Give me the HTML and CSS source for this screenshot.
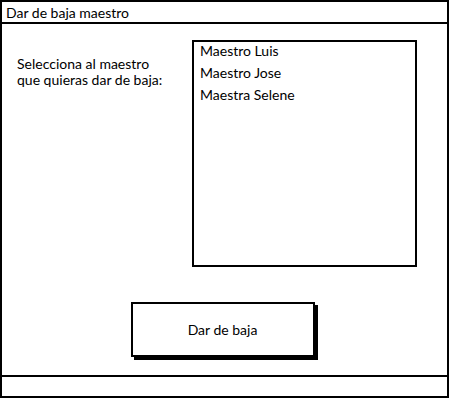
FILE: index.html
```html
<!DOCTYPE html>
<html lang="es">
<head>
<meta charset="utf-8">
<link rel="stylesheet" href="styles.css">
</head>
<body>
<div class="window">
  <div class="titlebar">Dar de baja maestro</div>
  <div class="main">
    <div class="row">
      <div class="label">Selecciona al maestro<br>que quieras dar de baja:</div>
      <ul class="listbox">
        <li>Maestro Luis</li>
        <li>Maestro Jose</li>
        <li>Maestra Selene</li>
      </ul>
    </div>
    <div class="actions">
      <button class="btn">Dar de baja</button>
    </div>
  </div>
  <div class="footer"></div>
</div>
</body>
</html>
```
FILE: styles.css
```css
* { box-sizing: border-box; }
html, body { margin: 0; padding: 0; background: #fff; }
body {
  font-family: Lato, "Open Sans", "Noto Sans", sans-serif;
  font-size: 14px;
  color: #000;
}
.window {
  width: 449px;
  height: 398px;
  border: 2px solid #000;
  display: flex;
  flex-direction: column;
}
.titlebar {
  height: 22px;
  line-height: 21px;
  padding-left: 4px;
  border-bottom: 2px solid #000;
}
.main {
  flex: 1;
  display: flex;
  flex-direction: column;
  padding: 16px 0 0 15px;
}
.row {
  display: flex;
}
.label {
  width: 175px;
  padding-top: 16px;
  line-height: 16px;
}
.listbox {
  margin: 0;
  list-style: none;
  width: 225px;
  height: 227px;
  border: 2px solid #000;
  padding: 0 6px;
}
.listbox li {
  line-height: 17px;
  margin-bottom: 5px;
}
.actions {
  display: flex;
  justify-content: center;
  padding-top: 35px;
  padding-right: 19px;
}
.btn {
  width: 184px;
  height: 55px;
  border: 2px solid #000;
  background: #fff;
  box-shadow: 3px 3px 0 #000;
  font: inherit;
  color: #000;
  padding: 0;
}
.footer {
  height: 21px;
  border-top: 2px solid #000;
}
```
